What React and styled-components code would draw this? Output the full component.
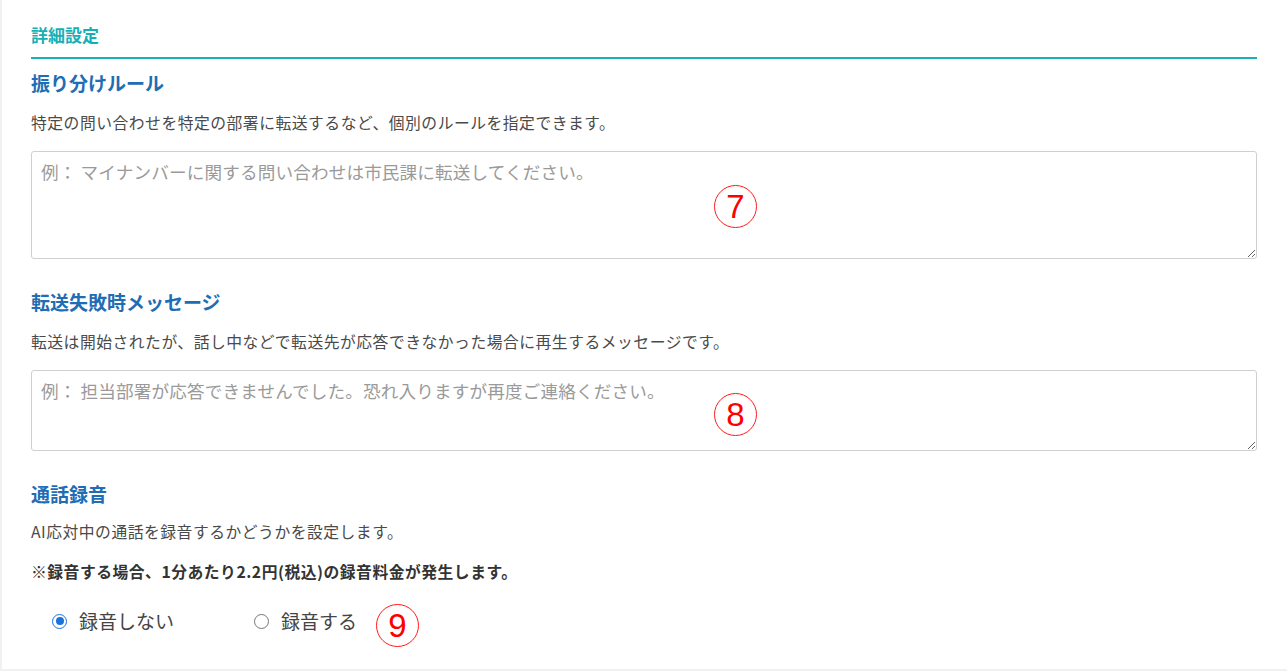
import React from "react";
import styled, { createGlobalStyle } from "styled-components";

const GlobalStyle = createGlobalStyle`
  html, body { margin: 0; padding: 0; }
  body {
    background: #f1f1f1;
    font-family: "Noto Sans CJK JP", "Noto Sans", sans-serif;
    color: #444;
  }
`;

const Card = styled.div`
  background: #fff;
  margin: 0 0 2px 2px;
  padding: 23px 30px 34px 29px;
  min-height: 600px;
  box-sizing: border-box;
`;

const SectionTitle = styled.h2`
  margin: 0;
  font-size: 17px;
  line-height: 24px;
  font-weight: 700;
  color: #17afb6;
  padding-bottom: 10px;
  border-bottom: 2px solid #17b1b6;
`;

const Field = styled.section`
  display: flex;
  flex-direction: column;
  margin-top: ${(p) => (p.$first ? "10px" : "29px")};
`;

const Heading = styled.h3`
  margin: 0;
  font-size: 19px;
  line-height: 28px;
  font-weight: 700;
  color: #1f6db4;
`;

const Desc = styled.p`
  margin: ${(p) => p.$mt || "14px"} 0 0;
  font-size: 15.8px;
  line-height: 24px;
  letter-spacing: 0.5px;
  font-weight: ${(p) => (p.$bold ? 700 : 400)};
  color: ${(p) => (p.$bold ? "#333" : "#4a4a4a")};
`;

const AreaWrap = styled.div`
  position: relative;
  margin-top: 16px;
  display: flex;
`;

const TextArea = styled.textarea`
  flex: 1;
  height: ${(p) => p.$h}px;
  box-sizing: border-box;
  border: 1px solid #cfcfcf;
  border-radius: 3px;
  padding: 7px 9px;
  font-family: "Noto Sans CJK JP", "Noto Sans", sans-serif;
  font-size: 17.6px;
  line-height: 26px;
  letter-spacing: 0.15px;
  color: #333;
  outline: none;
  resize: vertical;
  &::placeholder {
    color: #9a9a9a;
  }
`;

const Marker = styled.span`
  position: ${(p) => (p.$inline ? "relative" : "absolute")};
  left: ${(p) => (p.$inline ? "0" : `${p.$x}px`)};
  top: ${(p) => (p.$inline ? "4px" : `${p.$y}px`)};
  width: 43px;
  height: 43px;
  box-sizing: border-box;
  border: 1.5px solid #ff1a1a;
  border-radius: 50%;
  display: inline-flex;
  align-items: center;
  justify-content: center;
  color: #ff0000;
  font-family: "Liberation Sans", Arial, sans-serif;
  font-size: 33px;
  line-height: 1;
  pointer-events: none;
  margin-left: ${(p) => (p.$inline ? "19px" : "0")};
`;

const RadioRow = styled.div`
  display: flex;
  align-items: center;
  margin-top: 23px;
  padding-left: 21px;
  height: 28px;
`;

const RadioLabel = styled.label`
  display: inline-flex;
  align-items: center;
  gap: 12px;
  font-size: 19px;
  line-height: 28px;
  color: #444;
  margin-right: ${(p) => p.$mr || "0"};
  cursor: pointer;
`;

const RadioInput = styled.input`
  appearance: none;
  -webkit-appearance: none;
  width: 15px;
  height: 15px;
  margin: 0;
  box-sizing: border-box;
  border-radius: 50%;
  border: 1.5px solid #767676;
  display: grid;
  place-items: center;
  background: #fff;
  &:checked {
    border-color: #1a73d9;
  }
  &:checked::before {
    content: "";
    width: 8px;
    height: 8px;
    border-radius: 50%;
    background: #1a73d9;
  }
`;

export default function App() {
  const [rec, setRec] = React.useState("off");
  return (
    <>
      <GlobalStyle />
      <Card>
        <SectionTitle>詳細設定</SectionTitle>

        <Field $first>
          <Heading>振り分けルール</Heading>
          <Desc>特定の問い合わせを特定の部署に転送するなど、個別のルールを指定できます。</Desc>
          <AreaWrap>
            <TextArea
              $h={108}
              placeholder="例： マイナンバーに関する問い合わせは市民課に転送してください。"
            />
            <Marker $x={683} $y={34}>7</Marker>
          </AreaWrap>
        </Field>

        <Field>
          <Heading>転送失敗時メッセージ</Heading>
          <Desc>転送は開始されたが、話し中などで転送先が応答できなかった場合に再生するメッセージです。</Desc>
          <AreaWrap>
            <TextArea
              $h={81}
              placeholder="例： 担当部署が応答できませんでした。恐れ入りますが再度ご連絡ください。"
            />
            <Marker $x={683} $y={23}>8</Marker>
          </AreaWrap>
        </Field>

        <Field>
          <Heading>通話録音</Heading>
          <Desc $mt="12px">AI応対中の通話を録音するかどうかを設定します。</Desc>
          <Desc $mt="16px" $bold>※録音する場合、1分あたり2.2円(税込)の録音料金が発生します。</Desc>
          <RadioRow>
            <RadioLabel $mr="80px">
              <RadioInput
                type="radio"
                name="rec"
                checked={rec === "off"}
                onChange={() => setRec("off")}
              />
              録音しない
            </RadioLabel>
            <RadioLabel>
              <RadioInput
                type="radio"
                name="rec"
                checked={rec === "on"}
                onChange={() => setRec("on")}
              />
              録音する
            </RadioLabel>
            <Marker $inline>9</Marker>
          </RadioRow>
        </Field>
      </Card>
    </>
  );
}
